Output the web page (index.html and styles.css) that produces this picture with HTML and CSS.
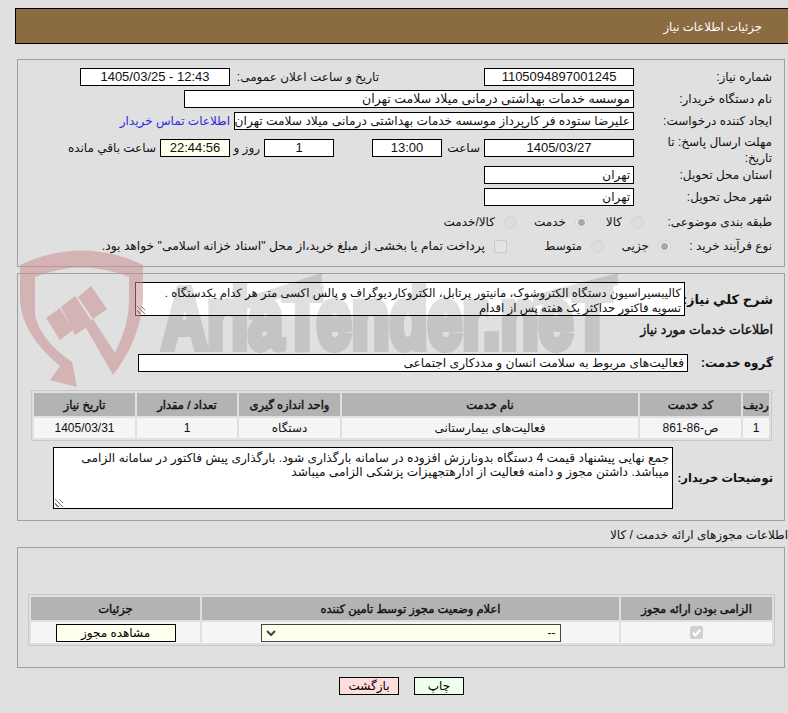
FILE: index.html
```html
<!DOCTYPE html>
<html lang="fa" dir="rtl">
<head>
    <meta charset="UTF-8">
    <title>جزئیات اطلاعات نیاز</title>
    <link rel="stylesheet" href="styles.css">
</head>
<body>
    <div class="page-title">جزئیات اطلاعات نیاز</div>

    <section class="panel panel-need">
        <div class="row">
            <label class="row-label">شماره نیاز:</label>
            <div class="field field-num">1105094897001245</div>
            <label class="side-label side-announce">تاریخ و ساعت اعلان عمومی:</label>
            <div class="field field-announce">1405/03/25 - 12:43</div>
        </div>
        <div class="row">
            <label class="row-label">نام دستگاه خریدار:</label>
            <div class="field field-buyer">موسسه خدمات بهداشتی درمانی میلاد سلامت تهران</div>
        </div>
        <div class="row">
            <label class="row-label">ایجاد کننده درخواست:</label>
            <div class="field field-creator">علیرضا ستوده فر کارپرداز موسسه خدمات بهداشتی درمانی میلاد سلامت تهران</div>
            <a class="contact-link" href="#">اطلاعات تماس خریدار</a>
        </div>
        <div class="row row-deadline">
            <label class="row-label row-label-wrap">مهلت ارسال پاسخ: تا تاریخ:</label>
            <div class="field field-num">1405/03/27</div>
            <span class="side-label side-hour">ساعت</span>
            <div class="field field-small">13:00</div>
            <div class="field field-small field-days">1</div>
            <span class="side-label side-days">روز و</span>
            <div class="field field-small field-timer">22:44:56</div>
            <span class="side-label side-left">ساعت باقي مانده</span>
        </div>
        <div class="row">
            <label class="row-label">استان محل تحویل:</label>
            <div class="field field-num field-start">تهران</div>
        </div>
        <div class="row">
            <label class="row-label">شهر محل تحویل:</label>
            <div class="field field-num field-start">تهران</div>
        </div>
        <div class="row row-choice row-subject">
            <label class="row-label row-label-subject">طبقه بندی موضوعی:</label>
            <span class="radio"></span><span class="choice choice-subject-a">کالا</span>
            <span class="radio radio-on"></span><span class="choice choice-subject-b">خدمت</span>
            <span class="radio"></span><span class="choice">کالا/خدمت</span>
        </div>
        <div class="row row-choice">
            <label class="row-label row-label-process">نوع فرآیند خرید :</label>
            <span class="radio radio-on"></span><span class="choice choice-process-a">جزیی</span>
            <span class="radio"></span><span class="choice choice-process-b">متوسط</span>
            <span class="checkbox"></span><span class="choice choice-pay">پرداخت تمام یا بخشی از مبلغ خرید،از محل "اسناد خزانه اسلامی" خواهد بود.</span>
        </div>
    </section>

    <section class="panel panel-detail">
        <div class="detail-row">
            <label class="detail-label">شرح کلي نیاز:</label>
            <div class="text-box text-box-summary">کالیبسیراسیون دستگاه الکتروشوک، مانیتور پرتابل، الکتروکاردیوگراف و پالس اکسی متر هر کدام یکدستگاه .
تسویه فاکتور حداکثر یک هفته پس از اقدام<span class="grip"></span></div>
        </div>
        <h3 class="detail-heading">اطلاعات خدمات مورد نیاز</h3>
        <div class="detail-row">
            <label class="detail-label detail-label-group">گروه خدمت:</label>
            <div class="field field-group">فعالیت‌های مربوط به سلامت انسان و مددکاری اجتماعی</div>
        </div>
        <table class="grid-table grid-services">
            <tr>
                <th class="col-row">ردیف</th>
                <th class="col-code">کد خدمت</th>
                <th class="col-name">نام خدمت</th>
                <th class="col-unit">واحد اندازه گیری</th>
                <th class="col-qty">تعداد / مقدار</th>
                <th class="col-date">تاریخ نیاز</th>
            </tr>
            <tr>
                <td>1</td>
                <td>ص-86-861</td>
                <td>فعالیت‌های بیمارستانی</td>
                <td>دستگاه</td>
                <td>1</td>
                <td>1405/03/31</td>
            </tr>
        </table>
        <div class="detail-row">
            <label class="detail-label detail-label-notes">توضیحات خریدار:</label>
            <div class="text-box text-box-notes">جمع نهایی پیشنهاد قیمت 4 دستگاه بدونارزش افزوده در سامانه بارگذاری شود. بارگذاری پیش فاکتور در سامانه الزامی میباشد. داشتن مجوز و دامنه فعالیت از ادارهتجهیزات پزشکی الزامی میباشد<span class="grip"></span></div>
        </div>
    </section>

    <div class="license-title">اطلاعات مجوزهای ارائه خدمت / کالا</div>

    <section class="panel panel-license">
        <table class="grid-table grid-license">
            <tr>
                <th class="col-required">الزامی بودن ارائه مجوز</th>
                <th class="col-status">اعلام وضعیت مجوز توسط تامین کننده</th>
                <th class="col-details">جزئیات</th>
            </tr>
            <tr>
                <td><span class="tick">
                    <svg width="13" height="13" viewBox="0 0 13 13"><rect width="13" height="13" rx="2" fill="#d0d0d0"/><path d="M3 6.8 L5.5 9.4 L10.2 3.6" fill="none" stroke="#fff" stroke-width="2.2"/></svg>
                </span></td>
                <td>
                    <div class="select-box">
                        <span>--</span>
                        <svg width="10" height="6" viewBox="0 0 10 6"><path d="M1 1 L5 5 L9 1" fill="none" stroke="#444" stroke-width="2"/></svg>
                    </div>
                </td>
                <td><button class="btn btn-view" type="button">مشاهده مجوز</button></td>
            </tr>
        </table>
    </section>

    <div class="actions">
        <button class="btn btn-print" type="button">چاپ</button>
        <button class="btn btn-back" type="button">بازگشت</button>
    </div>

    <!-- watermark sits on top of the page, like the site's overlay -->
    <svg class="watermark" width="788" height="713" viewBox="0 0 788 713" aria-hidden="true">
        <g class="watermark-mark">
            <path d="M20 265 Q82 236 143 265 L143 300 Q140 340 113 375 L85 326 L93 319 L115 353 Q129 325 129 300 L129 277 Q82 258 35 277 L35 315 Q40 340 72 362 L77 387 L50 380 L60 366 Q22 335 20 300 Z"/>
            <path d="M46 318 L60 308 L73 330 L60 340 Z"/>
            <path d="M61 307 L75 296 L93 323 L75 335 Z"/>
            <path d="M78 297 L91 286 L107 309 L93 319 Z"/>
        </g>
        <g class="watermark-name">
            <text transform="translate(162 348) scale(.725 1)">AriaTender.neT</text>
            <path d="M247 297 L322 273 L322 285 L247 309 Z"/>
            <path d="M533 295 L618 273 L618 285 L533 307 Z"/>
        </g>
    </svg>
</body>
</html>
```

FILE: styles.css
```css
body {
    font-family: "Liberation Sans", "DejaVu Sans", sans-serif;
    font-size: 12px;
    color: #111;
    background-color: #e0e0e0;
    margin: 0;
    padding: 8px 0 0;
    height: 705px;
    overflow: hidden;
    position: relative;
}
.watermark {
    position: absolute;
    top: 0;
    left: 0;
    direction: ltr;
    pointer-events: none;
}
.watermark-mark {
    fill: #cc9092;
    opacity: .55;
}
.watermark-name {
    fill: #000;
    opacity: .12;
    font-family: "Liberation Sans", sans-serif;
    font-size: 86px;
    font-weight: bold;
}
.watermark-name text {
    stroke: #000;
    stroke-width: 8px;
}
.page-title {
    height: 36px;
    line-height: 36px;
    box-sizing: border-box;
    margin: 0 -2px 15px 15px;
    padding-right: 27px;
    background-color: #8b6b42;
    border: 1px solid #000;
    color: #fff;
    font-size: 11.7px;
}
.panel {
    position: relative;
    box-sizing: border-box;
    margin: 0 3px 0 17px;
    border: 1px solid #a0a0a0;
}
.panel-need {
    height: 208px;
    padding-top: 8px;
    margin-bottom: 6px;
}
.panel-detail {
    height: 248px;
    padding-top: 8px;
}
.panel-license {
    height: 121px;
    padding: 46px 9px 0 0;
}
.row {
    display: flex;
    align-items: center;
    height: 18px;
    margin-bottom: 4px;
}
.row-deadline {
    margin: 9px 0;
}
.row-choice {
    margin-bottom: 6px;
}
.row-subject {
    margin-top: 7px;
}
.row-label {
    box-sizing: border-box;
    width: 150px;
    flex: none;
    padding: 0 12px 0 0;
}
.row-label-wrap {
    padding-left: 8px;
    line-height: 16px;
    margin-top: 4px;
}
.row-label-subject {
    width: 140px;
}
.row-label-process {
    width: 113px;
}
.field {
    box-sizing: border-box;
    height: 18px;
    line-height: 16px;
    background-color: #fff;
    border: 1px solid #000;
    padding: 0 3px;
    white-space: nowrap;
    overflow: hidden;
    flex: none;
}
.field-num {
    width: 150px;
    text-align: center;
    font-size: 13px;
}
.field-start {
    text-align: right;
    font-size: 12px;
}
.side-announce {
    width: 145px;
    margin-right: 105px;
}
.field-announce {
    width: 150px;
    margin-right: 4px;
    text-align: center;
    font-size: 13px;
    direction: ltr;
}
.field-buyer {
    width: 450px;
    font-size: 12.5px;
}
.field-creator {
    width: 400px;
    font-size: 12.2px;
}
.contact-link {
    color: #2a2ae0;
    text-decoration: none;
    margin-right: 4px;
    white-space: nowrap;
}
.field-small {
    width: 70px;
    text-align: center;
    font-size: 13px;
}
.field-days {
    margin-right: 38px;
}
.field-timer {
    background-color: #ffffee;
}
.side-label {
    white-space: nowrap;
}
.side-hour {
    width: 38px;
    margin-right: 4px;
}
.side-days {
    width: 26px;
    margin: 0 4px;
}
.side-left {
    margin-right: 4px;
}
.radio {
    box-sizing: border-box;
    width: 13px;
    height: 13px;
    border-radius: 50%;
    background-color: #dcdcdc;
    border: 1px solid #d2d2d2;
    flex: none;
}
.radio-on {
    background: radial-gradient(circle, #a8a8a8 0 3px, #e8e8e8 4px);
}
.checkbox {
    box-sizing: border-box;
    width: 13px;
    height: 13px;
    border: 1px solid #c8c8c8;
    border-radius: 2px;
    background-color: #e4e4e4;
    flex: none;
}
.choice {
    white-space: nowrap;
    margin-right: 9px;
}
.choice-subject-a {
    width: 22px;
    margin-left: 12px;
}
.choice-subject-b {
    width: 49px;
}
.choice-process-a {
    width: 28px;
    margin-left: 17px;
}
.choice-process-b {
    width: 36px;
    margin-left: 39px;
}
.choice-pay {
    font-size: 12.3px;
}
.detail-row {
    display: flex;
    align-items: center;
}
.detail-label {
    width: 99px;
    flex: none;
    box-sizing: border-box;
    padding-right: 11px;
    font-weight: bold;
    font-size: 13px;
    white-space: nowrap;
}
.detail-label-group {
    width: 96px;
    font-size: 12px;
}
.detail-label-notes {
    width: 111px;
    font-size: 11.5px;
}
.text-box {
    position: relative;
    box-sizing: border-box;
    border: 1px solid #000;
    background-color: #fff;
    padding: 2px 3px;
    line-height: 15px;
    white-space: pre-line;
    flex: none;
}
.text-box-summary {
    width: 550px;
    height: 34px;
    font-size: 11.7px;
}
.text-box-notes {
    width: 620px;
    height: 62px;
    padding-top: 3px;
    line-height: 14px;
    font-size: 12.2px;
}
.grip {
    position: absolute;
    left: 1px;
    bottom: 1px;
    width: 8px;
    height: 8px;
    background: repeating-linear-gradient(45deg, transparent 0 2px, #777 2px 3px);
}
.detail-heading {
    font-size: 12.5px;
    font-weight: normal;
    -webkit-text-stroke: .4px #111;
    line-height: 15px;
    margin: 7px 11px 16px 0;
}
.field-group {
    width: 550px;
    font-size: 12.2px;
}
.grid-table {
    table-layout: fixed;
    border-collapse: separate;
    border-spacing: 2px;
    border: 1px solid #c8c8c8;
    text-align: center;
}
.grid-table th {
    background-color: #b3b3b3;
    height: 23px;
    padding: 0;
    font-size: 11.5px;
    font-weight: normal;
    -webkit-text-stroke: .4px #111;
}
.grid-table td {
    background-color: #f5f5f5;
    height: 20px;
    padding: 0;
    font-size: 12px;
}
.grid-services {
    width: 741px;
    margin: 18px 12px 6px 0;
}
.col-row { width: 26px; }
.col-code { width: 101px; }
.col-name { width: 296px; }
.col-unit { width: 101px; }
.col-qty { width: 100px; }
.col-date { width: 101px; }
.grid-license {
    width: 747px;
}
.col-required { width: 151px; }
.col-status { width: 417px; }
.col-details { width: 169px; }
.grid-license td {
    height: 21px;
}
.tick {
    display: block;
    line-height: 0;
}
.select-box {
    box-sizing: border-box;
    display: flex;
    justify-content: space-between;
    align-items: center;
    width: 300px;
    height: 18px;
    margin: 0 auto;
    padding: 0 4px;
    background-color: #ffffee;
    border: 1px solid #444;
}
.btn {
    box-sizing: border-box;
    height: 18px;
    font-family: inherit;
    font-size: 12px;
    line-height: 14px;
    padding: 0;
    border: 1px solid #000;
    cursor: pointer;
}
.btn-view {
    width: 120px;
    background-color: #ffffee;
    display: block;
    margin: 0 auto;
}
.btn-print {
    width: 50px;
    background-color: #eeffee;
}
.btn-back {
    width: 60px;
    background-color: #ffdddd;
}
.license-title {
    margin: 7px 0 4px;
    height: 15px;
    line-height: 15px;
}
.actions {
    display: flex;
    gap: 15px;
    margin: 9px 324px 0 0;
}
```
